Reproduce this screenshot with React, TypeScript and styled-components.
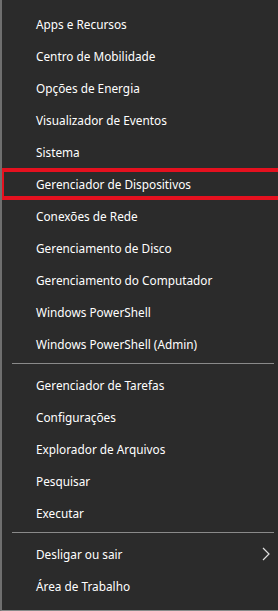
import React from "react";
import styled, { createGlobalStyle } from "styled-components";

const Global = createGlobalStyle`
  html, body { margin: 0; padding: 0; background: #2b2b2b; }
  #root { width: 278px; height: 611px; }
`;

const Menu = styled.nav`
  box-sizing: border-box;
  width: 278px;
  height: 611px;
  background: #2b2b2b;
  border-left: 2px solid #6f6f6f;
  border-bottom: 1px solid #8a8a8a;
  padding: 7px 0 0 0;
  display: flex;
  flex-direction: column;
  font-family: "Noto Sans", "Open Sans", sans-serif;
  overflow: hidden;
`;

const Item = styled.div<{ $highlighted?: boolean }>`
  position: relative;
  box-sizing: border-box;
  height: 32px;
  display: flex;
  align-items: center;
  justify-content: space-between;
  padding: 2px 8px 0 34px;
  color: #ffffff;
  font-size: 11.8px;
  &::after {
    content: "";
    display: ${(p) => (p.$highlighted ? "block" : "none")};
    position: absolute;
    left: -2px;
    right: -4px;
    top: 1px;
    bottom: -1px;
    border: 4px solid #e5111f;
    pointer-events: none;
  }
`;

const Separator = styled.hr`
  border: none;
  height: 1px;
  background: #8a8a8a;
  margin: 4px 4px 4px 10px;
`;

const Chevron = styled.svg`
  width: 8px;
  height: 14px;
  flex: none;
`;

const groups: string[][] = [
  [
    "Apps e Recursos",
    "Centro de Mobilidade",
    "Opções de Energia",
    "Visualizador de Eventos",
    "Sistema",
    "Gerenciador de Dispositivos",
    "Conexões de Rede",
    "Gerenciamento de Disco",
    "Gerenciamento do Computador",
    "Windows PowerShell",
    "Windows PowerShell (Admin)",
  ],
  [
    "Gerenciador de Tarefas",
    "Configurações",
    "Explorador de Arquivos",
    "Pesquisar",
    "Executar",
  ],
  ["Desligar ou sair", "Área de Trabalho"],
];

export default function App() {
  return (
    <>
      <Global />
      <Menu>
        {groups.map((g, gi) => (
          <React.Fragment key={gi}>
            {gi > 0 && <Separator />}
            {g.map((label) => (
              <Item key={label} $highlighted={label === "Gerenciador de Dispositivos"}>
                <span>{label}</span>
                {label === "Desligar ou sair" && (
                  <Chevron viewBox="0 0 8 14">
                    <path d="M1 1 L7 7 L1 13" fill="none" stroke="#e0e0e0" strokeWidth="1.2" />
                  </Chevron>
                )}
              </Item>
            ))}
          </React.Fragment>
        ))}
      </Menu>
    </>
  );
}
